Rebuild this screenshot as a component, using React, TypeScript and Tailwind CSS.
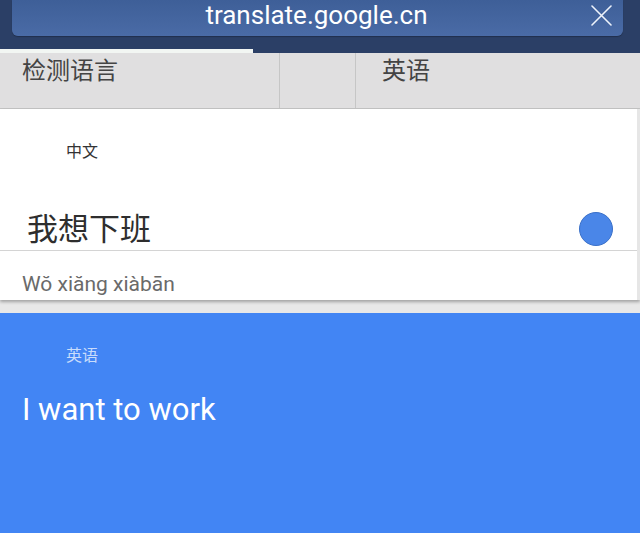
const cjk = "font-['Roboto','Noto_Sans_CJK_SC',sans-serif]";

function CloseIcon() {
  return (
    <svg
      className="absolute right-[11px] top-[5px]"
      width="21"
      height="21"
      viewBox="0 0 21 21"
      fill="none"
      stroke="#eef3fb"
      strokeWidth="1.6"
      strokeLinecap="round"
    >
      <path d="M1 1 L20 20 M20 1 L1 20" />
    </svg>
  );
}

function TopBar() {
  return (
    <div className="h-[53px] bg-[#2b3f66] shrink-0 flex flex-col">
      <div className="pl-3 pr-[17px]">
        <div className="h-[36px] rounded-b-md bg-gradient-to-b from-[#3e5f98] to-[#4a6ba6] flex items-center relative shadow-[0_1px_1px_rgba(0,0,0,0.25)]">
          <span className="w-full text-center text-white text-[26px] leading-none font-['Roboto',sans-serif] -mt-[7px] pr-[2px]">
            translate.google.cn
          </span>
          <CloseIcon />
        </div>
      </div>
      <div className="mt-auto h-[4px] w-[253px] bg-[#f2f6f3]" />
    </div>
  );
}

function LangTabs() {
  return (
    <div className="flex h-[56px] bg-[#e0dfe0] border-b border-[#c4c4c4] shrink-0">
      <div className="w-[280px] border-r border-[#c6c6c6] pl-[22px]">
        <span className={`${cjk} text-[24px] text-[#444]`}>检测语言</span>
      </div>
      <div className="w-[76px] border-r border-[#c6c6c6]" />
      <div className="flex-1 pl-[26px]">
        <span className={`${cjk} text-[24px] text-[#444]`}>英语</span>
      </div>
    </div>
  );
}

function SourceCard() {
  return (
    <div className="bg-white border-r-[3px] border-[#e6e6e6] shadow-[0_2px_3px_rgba(0,0,0,0.3)] relative z-10">
      <div className="h-[142px] flex flex-col border-b border-[#d4d4d4]">
        <div className={`${cjk} text-[16px] text-[#333] pl-[66px] pt-[31px]`}>
          中文
        </div>
        <div className="flex items-center justify-between mt-[48px] pl-[27px] pr-[24px]">
          <span className={`${cjk} text-[31px] text-[#2e2e2e] leading-none`}>
            我想下班
          </span>
          <div className="w-[34px] h-[34px] rounded-full bg-[#4a86e8] border border-[#3a70c8]" />
        </div>
      </div>
      <div className="h-[49px] pl-[22px] pt-[23px] text-[21px] leading-none text-[#6a6a6a] font-['Roboto',sans-serif]">
        Wŏ xiăng xiàbān
      </div>
    </div>
  );
}

function ResultCard() {
  return (
    <div className="flex-1 bg-[#4285f4] mt-[13px]">
      <div className={`${cjk} text-[16px] text-[#c9dcfb] pl-[66px] pt-[31px]`}>
        英语
      </div>
      <div className="pl-[22px] pt-[26px] text-[31px] leading-none text-white font-['Roboto',sans-serif]">
        I want to work
      </div>
    </div>
  );
}

export default function App() {
  return (
    <div className="w-[640px] h-[533px] bg-[#e8e8e8] flex flex-col overflow-hidden">
      <TopBar />
      <LangTabs />
      <SourceCard />
      <ResultCard />
    </div>
  );
}
